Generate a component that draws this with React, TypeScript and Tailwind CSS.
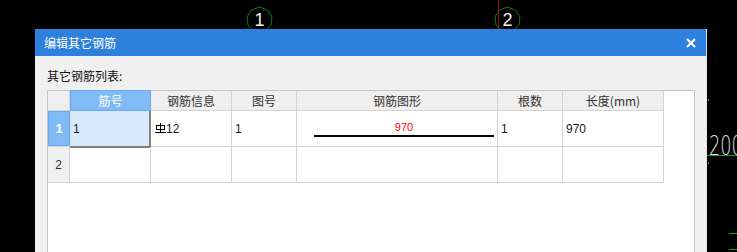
import React from "react";

function RebarSymbol() {
  return (
    <svg width="11" height="11" viewBox="0 0 11 11" className="shrink-0">
      <rect x="1.5" y="2.5" width="8" height="4" fill="none" stroke="#000" strokeWidth="1" />
      <line x1="5.5" y1="0" x2="5.5" y2="10" stroke="#000" strokeWidth="1" />
      <line x1="0" y1="9.5" x2="11" y2="9.5" stroke="#000" strokeWidth="1" />
    </svg>
  );
}

function AxisCircle({ label }: { label: string }) {
  return (
    <div className="relative w-[27px] h-[27px]">
      <svg width="27" height="27" viewBox="0 0 27 27" className="absolute inset-0">
        <polygon
          points="13.5,1 21.5,4 26,11 25,19 19.5,25 7.5,25 2,19 1,11 5.5,4"
          fill="none"
          stroke="#167a16"
          strokeWidth="1"
        />
      </svg>
      <span className="absolute inset-0 flex items-center justify-center text-[18px] leading-none text-[#f2f2f2] font-['Liberation_Sans',sans-serif]">
        {label}
      </span>
    </div>
  );
}

const cellBase = "h-full border-r border-[#d4d4d4] flex items-center";

export default function App() {
  return (
    <div className="relative w-[737px] h-[252px] bg-black overflow-hidden font-['Liberation_Sans','Noto_Sans_CJK_SC',sans-serif]">
      {/* CAD canvas decorations */}
      <div className="absolute left-[246px] top-[6px]">
        <AxisCircle label="1" />
      </div>
      <div className="absolute left-[498px] top-0 w-[1px] h-[29px] bg-[#9a0a0a]" />
      <div className="absolute left-[494px] top-[6px]">
        <AxisCircle label="2" />
      </div>
      <div className="absolute left-[709px] top-[131px] origin-left scale-x-[0.68] text-[26px] leading-[30px] text-[#e0e0e0] font-['DejaVu_Sans',sans-serif] font-extralight whitespace-nowrap">
        200
      </div>
      <div className="absolute left-[707px] top-[155px] w-[30px] h-[1px] bg-[#2f8f2f]" />
      <div className="absolute left-[708px] top-[99px] w-[1px] h-[2px] bg-[#2f8f2f]" />
      <div className="absolute left-[708px] top-[162px] w-[1px] h-[2px] bg-[#2f8f2f]" />
      <div className="absolute left-[729px] top-[233px] w-[8px] h-[1px] bg-[#2a9a2a]" />
      <div className="absolute left-[729px] top-[249px] w-[8px] h-[1px] bg-[#2a9a2a]" />

      {/* Dialog */}
      <div className="relative ml-[35px] mt-[29px] w-[672px] h-[240px] bg-[#f0f0f0] flex flex-col border-r border-[#e2e2e2]">
        <div className="h-[27px] bg-[#2e80dd] flex items-center justify-between pl-[9px] pr-[9px] shrink-0">
          <span className="text-[12px] text-white font-['Noto_Sans_CJK_SC',sans-serif]">编辑其它钢筋</span>
          <svg width="10" height="10" viewBox="0 0 10 10" className="mr-[1px]">
            <line x1="1" y1="1" x2="9" y2="9" stroke="#fff" strokeWidth="2" />
            <line x1="9" y1="1" x2="1" y2="9" stroke="#fff" strokeWidth="2" />
          </svg>
        </div>
        <div className="px-[12px] pt-[10px] flex flex-col">
          <div className="h-[20px] leading-[20px] text-[12px] text-[#111] font-['Noto_Sans_CJK_SC',sans-serif] mb-[4px]">
            其它钢筋列表:
          </div>
          <div className="w-[648px] h-[200px] bg-white border border-[#c6c6c6] flex flex-col text-[12px] text-[#1a1a1a]">
            {/* header */}
            <div className="flex w-[616px] h-[20px] border-b border-[#d4d4d4] bg-[#efefef] font-['Noto_Sans_CJK_SC',sans-serif] text-[#333]">
              <div className={`${cellBase} w-[22px]`} />
              <div className="w-[81px] border border-[#6aa9ef] bg-[#80bbf6] text-white flex items-center justify-center -mt-px -mb-px h-[21px]">
                筋号
              </div>
              <div className={`${cellBase} w-[81px] justify-center`}>钢筋信息</div>
              <div className={`${cellBase} w-[65px] justify-center`}>图号</div>
              <div className={`${cellBase} w-[201px] justify-center`}>钢筋图形</div>
              <div className={`${cellBase} w-[65px] justify-center`}>根数</div>
              <div className={`${cellBase} w-[101px] justify-center`}>长度(mm)</div>
            </div>
            {/* row 1 */}
            <div className="flex w-[616px] h-[36px] border-b border-[#d4d4d4]">
              <div className="h-full w-[22px] border border-[#6aa9ef] bg-[#80bbf6] text-white font-bold flex items-center justify-center text-[13px]">
                1
              </div>
              <div className="w-[81px] bg-[#d6e9fd] border-r-2 border-b-2 border-[#7f7f7f] flex items-center pl-[3px] -mb-px h-[37px]">
                1
              </div>
              <div className={`${cellBase} w-[81px] pl-[4px]`}>
                <RebarSymbol />
                <span>12</span>
              </div>
              <div className={`${cellBase} w-[65px] pl-[3px]`}>1</div>
              <div className="h-full border-r border-[#d4d4d4] w-[201px] flex flex-col pt-[10px] pl-[17px]">
                <div className="w-[180px] flex flex-col">
                  <div className="h-[13px] leading-[13px] text-center text-[11px] text-[#ff0000]">970</div>
                  <div className="mt-[1px] h-[2px] bg-black" />
                </div>
              </div>
              <div className={`${cellBase} w-[65px] pl-[3px]`}>1</div>
              <div className={`${cellBase} w-[101px] pl-[3px]`}>970</div>
            </div>
            {/* row 2 */}
            <div className="flex w-[616px] h-[36px] border-b border-[#d4d4d4]">
              <div className={`${cellBase} w-[22px] bg-[#f0f0f0] justify-center text-[#333]`}>2</div>
              <div className={`${cellBase} w-[81px]`} />
              <div className={`${cellBase} w-[81px]`} />
              <div className={`${cellBase} w-[65px]`} />
              <div className={`${cellBase} w-[201px]`} />
              <div className={`${cellBase} w-[65px]`} />
              <div className={`${cellBase} w-[101px]`} />
            </div>
          </div>
        </div>
      </div>
    </div>
  );
}
